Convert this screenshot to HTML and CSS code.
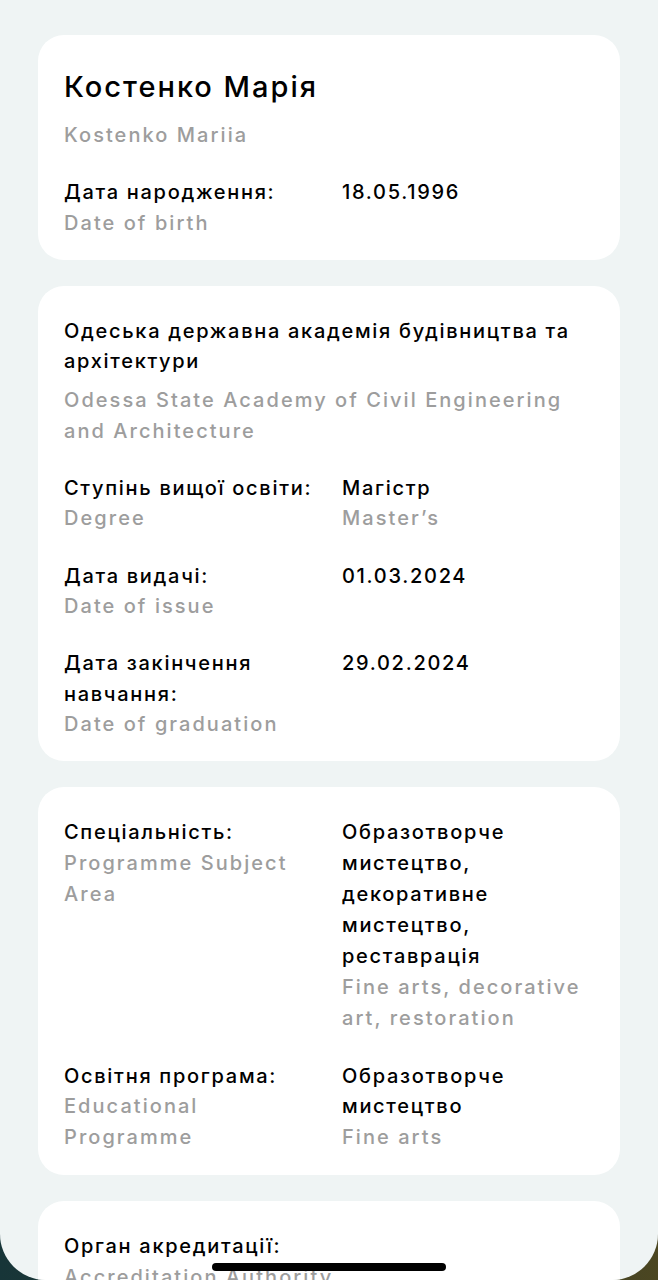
FILE: index.html
```html
<!DOCTYPE html>
<html lang="uk">
<head>
<meta charset="utf-8">
<title>Диплом</title>
<link rel="stylesheet" href="styles.css">
</head>
<body>
<div class="screen">
  <div class="content">
    <section class="card">
      <h1 class="name">Костенко Марія</h1>
      <p class="sub name-en">Kostenko Mariia</p>
      <div class="row">
        <div class="col"><p class="main">Дата народження:</p><p class="sub">Date of birth</p></div>
        <div class="col"><p class="main">18.05.1996</p></div>
      </div>
    </section>

    <section class="card">
      <div class="block">
        <p class="main">Одеська державна академія будівництва та архітектури</p>
        <p class="sub">Odessa State Academy of Civil Engineering and Architecture</p>
      </div>
      <div class="row">
        <div class="col"><p class="main">Ступінь вищої освіти:</p><p class="sub">Degree</p></div>
        <div class="col"><p class="main">Магістр</p><p class="sub">Master’s</p></div>
      </div>
      <div class="row">
        <div class="col"><p class="main">Дата видачі:</p><p class="sub">Date of issue</p></div>
        <div class="col"><p class="main">01.03.2024</p></div>
      </div>
      <div class="row">
        <div class="col"><p class="main">Дата закінчення навчання:</p><p class="sub">Date of graduation</p></div>
        <div class="col"><p class="main">29.02.2024</p></div>
      </div>
    </section>

    <section class="card loose">
      <div class="row first">
        <div class="col"><p class="main">Спеціальність:</p><p class="sub">Programme Subject Area</p></div>
        <div class="col"><p class="main">Образотворче мистецтво, декоративне мистецтво, реставрація</p><p class="sub">Fine arts, decorative art, restoration</p></div>
      </div>
      <div class="row">
        <div class="col"><p class="main">Освітня програма:</p><p class="sub">Educational Programme</p></div>
        <div class="col"><p class="main">Образотворче мистецтво</p><p class="sub">Fine arts</p></div>
      </div>
    </section>

    <section class="card">
      <div class="plain">
        <p class="main">Орган акредитації:</p>
        <p class="sub">Accreditation Authority</p>
      </div>
    </section>
  </div>
  <div class="home-indicator"></div>
</div>
</body>
</html>
```

FILE: styles.css
```css
* { box-sizing: border-box; }
html {
  background: linear-gradient(to right, #173538 0%, #2a3a30 50%, #4b4621 100%);
}
body {
  margin: 0;
  font-family: "Inter", "Noto Sans", sans-serif;
  color: #000;
}
.screen {
  position: relative;
  width: 658px;
  height: 1280px;
  overflow: hidden;
  background: #eff4f4;
  border-radius: 0 0 46px 46px;
}
.content {
  display: flex;
  flex-direction: column;
  gap: 26px;
  padding: 35px 38px 40px;
}
.card {
  background: #fff;
  border-radius: 26px;
  padding: 30px 26px 22px;
  display: flex;
  flex-direction: column;
  gap: 27px;
}
p, h1 { margin: 0; }
.main, .sub {
  font-size: 20px;
  line-height: 30.3px;
}
.loose .main, .loose .sub { line-height: 30.9px; }
.main { color: #000; font-weight: 500; letter-spacing: 1.7px; }
.sub { color: #9d9d9d; font-weight: 500; letter-spacing: 2.05px; }
.name {
  font-size: 29px;
  line-height: 44px;
  font-weight: 500;
  letter-spacing: 2px;
  margin-bottom: -16px;
}
.block { display: flex; flex-direction: column; gap: 9px; }
.row {
  display: grid;
  grid-template-columns: 278px 1fr;
}
.row .col:first-child { padding-right: 10px; }
.home-indicator {
  position: absolute;
  left: 212px;
  bottom: 9px;
  width: 234px;
  height: 8px;
  border-radius: 4px;
  background: #000;
}
```
